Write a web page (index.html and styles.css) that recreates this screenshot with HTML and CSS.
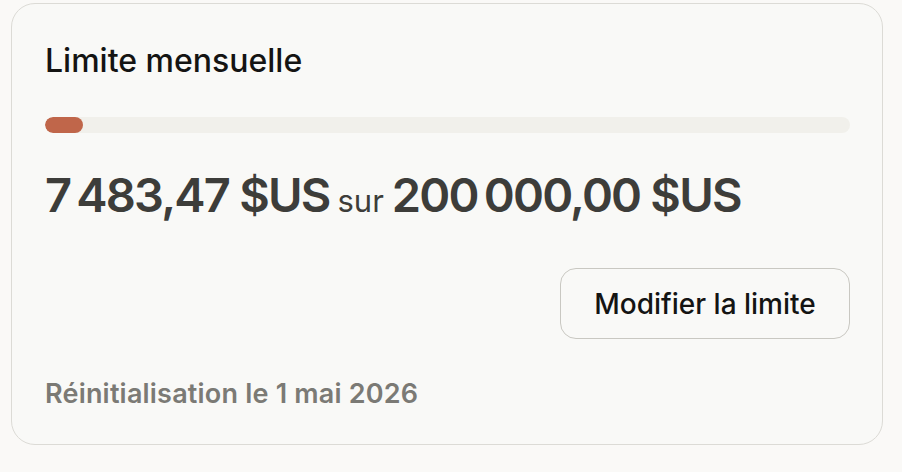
FILE: index.html
```html
<!DOCTYPE html>
<html lang="fr">

<head>
    <meta charset="UTF-8">
    <meta name="viewport" content="width=device-width, initial-scale=1.0">
    <title>Limite mensuelle</title>
    <link rel="stylesheet" href="styles.css">
</head>

<body>
    <div class="card">
        <h2 class="card-title">Limite mensuelle</h2>
        <div class="progress">
            <div class="progress-fill" style="width: 4.7%;"></div>
        </div>
        <div class="amount">
            <span class="amount-value">7&#8239;483,47 $US</span>
            <span class="amount-sep">sur</span>
            <span class="amount-value">200&#8239;000,00 $US</span>
        </div>
        <div class="actions">
            <button class="btn-outline">Modifier la limite</button>
        </div>
        <p class="reset-note">Réinitialisation le 1 mai 2026</p>
    </div>
</body>
</html>
```

FILE: styles.css
```css
:root {
    --page-bg: #faf9f7;
    --card-bg: #f9f9f7;
    --border: #dcdbd6;
    --text-strong: #141413;
    --text-amount: #3d3d3a;
    --text-muted: #7b7a75;
    --track: #f1f0eb;
    --fill: #c0664a;
}

body {
    margin: 0;
    padding: 3px 19px 27px 11px;
    background-color: var(--page-bg);
    font-family: Inter, "Noto Sans", sans-serif;
}

.card {
    background-color: var(--card-bg);
    border: 1px solid var(--border);
    border-radius: 24px;
    padding: 36px 32px 33px 33px;
    height: 442px;
    box-sizing: border-box;
    display: flex;
    flex-direction: column;
}

.card-title {
    margin: 0;
    font-size: 32px;
    font-weight: 500;
    line-height: 42px;
    color: var(--text-strong);
}

.progress {
    margin-top: 35px;
    height: 16px;
    border-radius: 8px;
    background-color: var(--track);
    overflow: hidden;
}

.progress-fill {
    height: 100%;
    border-radius: 8px;
    background-color: var(--fill);
}

.amount {
    margin-top: 32px;
    display: flex;
    align-items: baseline;
    gap: 8px;
    color: var(--text-amount);
}

.amount-value {
    font-size: 47px;
    font-weight: 600;
    line-height: 60px;
    letter-spacing: -1.8px;
}

.amount-sep {
    font-size: 31px;
    font-weight: 400;
}

.actions {
    margin-top: 43px;
    display: flex;
    justify-content: flex-end;
}

.btn-outline {
    width: 290px;
    height: 71px;
    border: 1px solid #c9c8c2;
    border-radius: 16px;
    background-color: transparent;
    font-family: inherit;
    font-size: 28px;
    font-weight: 500;
    color: var(--text-strong);
    cursor: pointer;
}

.reset-note {
    margin: auto 0 0;
    font-size: 27px;
    font-weight: 600;
    line-height: 34px;
    letter-spacing: 0.2px;
    color: var(--text-muted);
}
```
